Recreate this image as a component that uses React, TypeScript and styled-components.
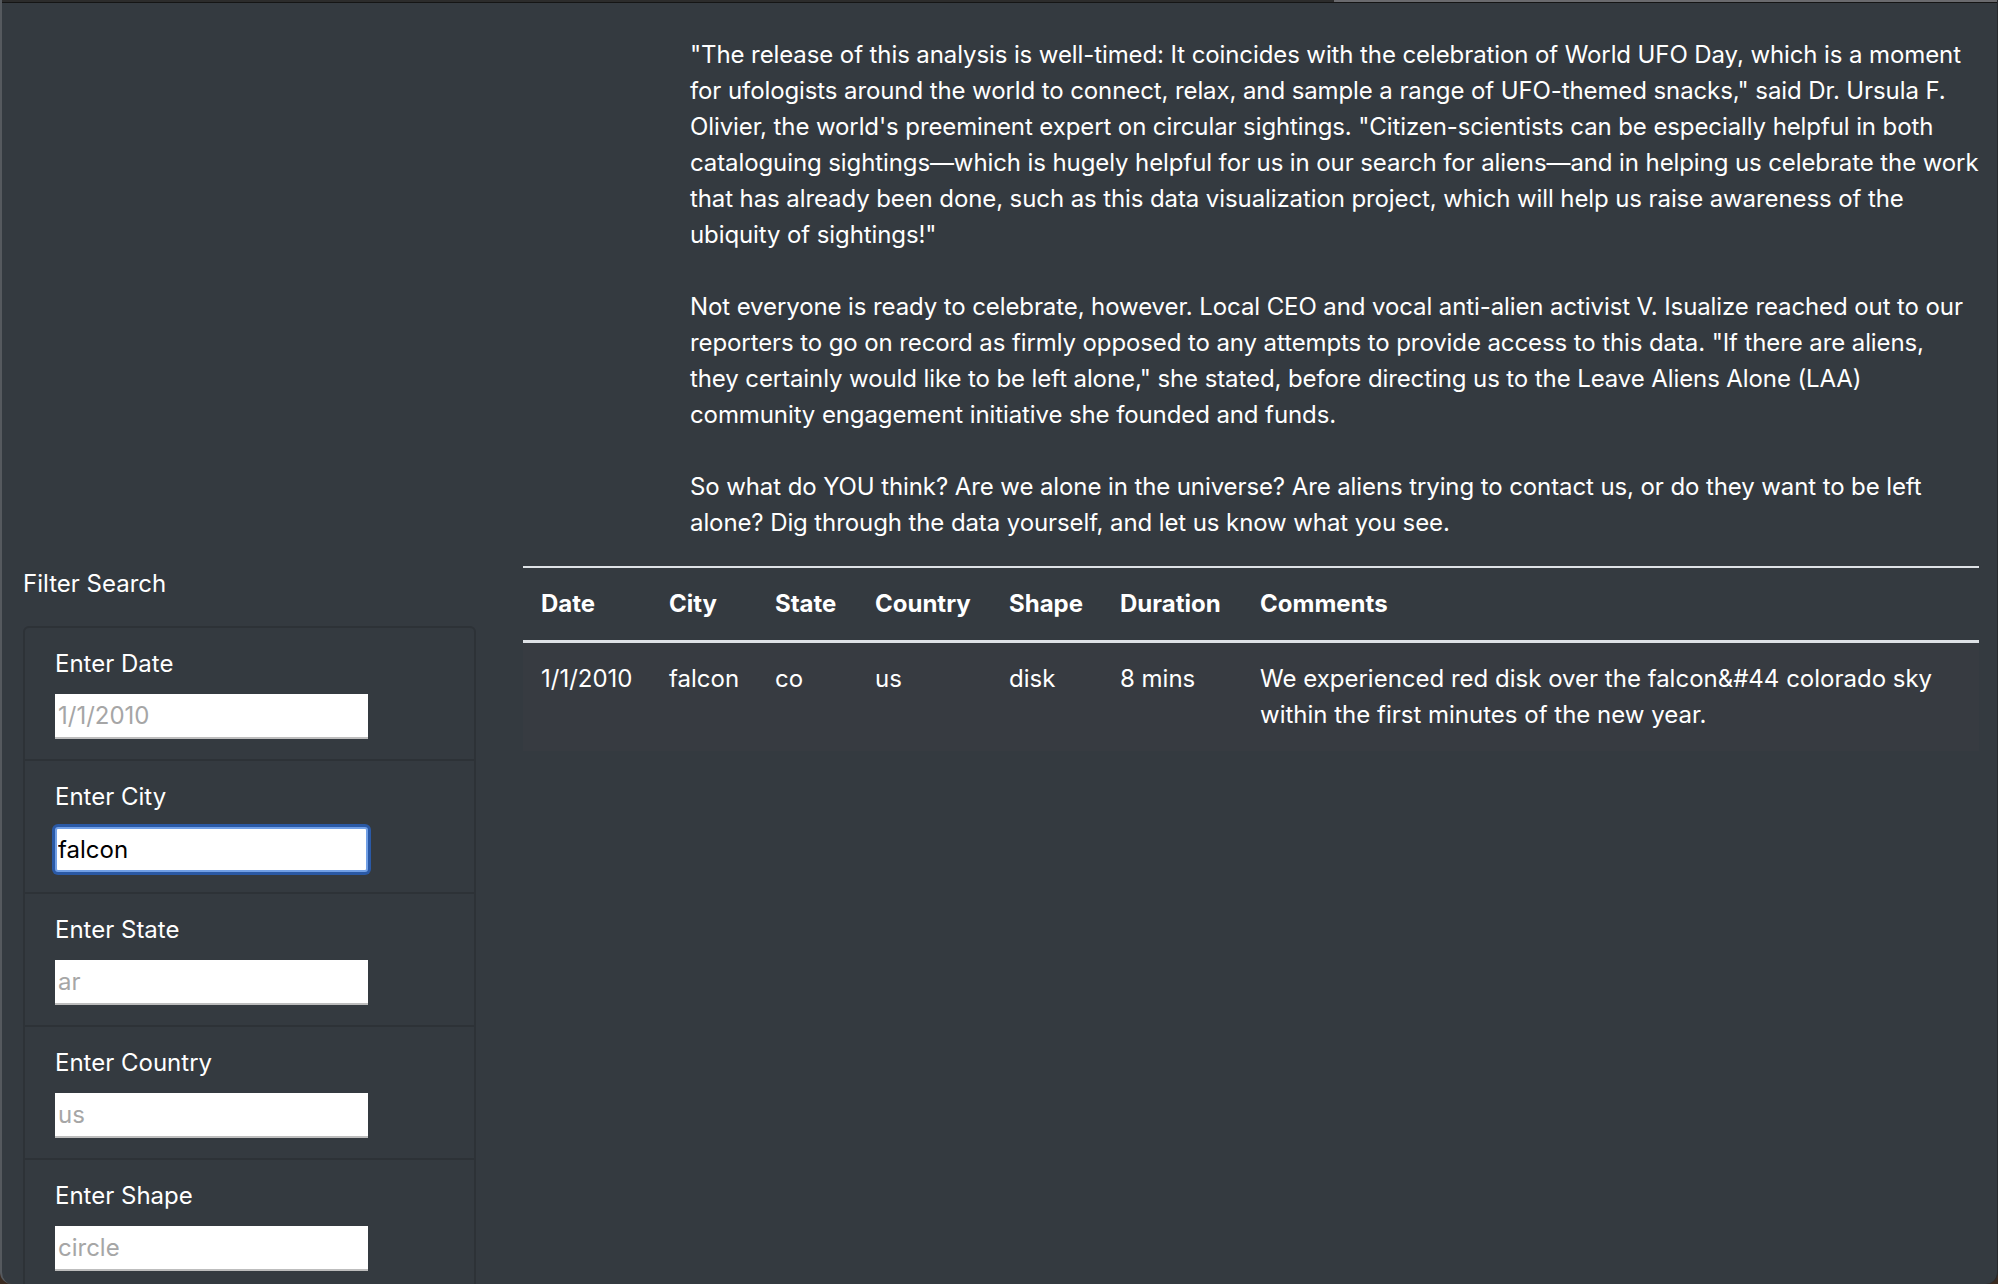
import React from 'react';
import styled, { createGlobalStyle, css } from 'styled-components';

const GlobalStyle = createGlobalStyle`
  html, body {
    margin: 0;
    padding: 0;
    background: #3a2a20;
  }
  body {
    font-family: Inter, "Noto Sans", "Liberation Sans", sans-serif;
  }
  * {
    box-sizing: border-box;
  }
`;

const Window = styled.div`
  width: 1998px;
  height: 1284px;
  overflow: hidden;
  display: flex;
  flex-direction: column;
  background: #343a40;
  color: #ffffff;
  border-left: 2px solid #55595e;
  border-right: 1px solid #272a2e;
  border-bottom-left-radius: 12px;
  border-bottom-right-radius: 12px;
  font-size: 24px;
  line-height: 36px;
`;

const FrameEdge = styled.div`
  display: flex;
  height: 3px;
  flex: 0 0 auto;
  border-bottom: 1px solid #151515;
`;

const EdgeSegment = styled.div<{ $light?: boolean }>`
  height: 2px;
  background: ${({ $light }) => ($light ? '#6a6a6e' : '#2c2c2c')};
  ${({ $light }) =>
    $light
      ? css`
          flex: 1;
        `
      : css`
          flex: 0 0 1332px;
        `}
`;

const Intro = styled.section`
  padding: 34px 18px 0 688px;
`;

const Paragraph = styled.p`
  margin: 0 0 36px;
  letter-spacing: -0.1px;

  &:last-child {
    margin-bottom: 25px;
  }
`;

const Main = styled.main`
  display: flex;
  align-items: flex-start;
  gap: 47px;
  padding: 0 18px 0 21px;
`;

const Sidebar = styled.aside`
  flex: 0 0 453px;
  display: flex;
  flex-direction: column;
`;

const SidebarTitle = styled.div`
  margin: 0 0 24px 0;
`;

const FilterList = styled.ul`
  list-style: none;
  margin: 0;
  padding: 0;
  border: 2px solid #2d3237;
  border-radius: 6px;
`;

const FilterItem = styled.li`
  padding: 18px 30px 20px;

  & + & {
    border-top: 2px solid #2d3237;
  }
`;

const FilterLabel = styled.label`
  display: block;
  margin-bottom: 12px;
`;

const FilterInput = styled.input<{ $focused?: boolean }>`
  display: block;
  width: 313px;
  height: 45px;
  margin: 0;
  padding: 0 0 0 3px;
  font-family: inherit;
  font-size: 24px;
  color: #000000;
  background: #ffffff;
  border: none;
  border-bottom: 2px solid #bdbdbd;
  border-radius: 0;
  outline: none;

  &::placeholder {
    color: #a6a6a6;
  }

  ${({ $focused }) =>
    $focused &&
    css`
      padding-left: 1px;
      border: 2px solid #72a0e6;
      border-radius: 3px;
      box-shadow: 0 0 0 3px #2a59a6;
    `}
`;

const TableWrap = styled.div`
  flex: 1;
`;

const Table = styled.table`
  width: 100%;
  border-collapse: collapse;
  table-layout: fixed;
  color: #ffffff;
`;

const Col = styled.col<{ $width?: number }>`
  width: ${({ $width }) => ($width ? `${$width}px` : 'auto')};
`;

const HeadCell = styled.th`
  padding: 18px;
  text-align: left;
  font-weight: 700;
  vertical-align: bottom;
  border-top: 2px solid #dee2e6;
  border-bottom: 3px solid #dee2e6;
`;

const BodyRow = styled.tr`
  background: #373b41;
`;

const Cell = styled.td`
  padding: 18px;
  vertical-align: top;
`;

const filters = [
  { label: 'Enter Date', placeholder: '1/1/2010' },
  { label: 'Enter City', placeholder: 'los angeles', value: 'falcon', focused: true },
  { label: 'Enter State', placeholder: 'ar' },
  { label: 'Enter Country', placeholder: 'us' },
  { label: 'Enter Shape', placeholder: 'circle' },
];

const columns = [
  { title: 'Date', width: 128 },
  { title: 'City', width: 106 },
  { title: 'State', width: 100 },
  { title: 'Country', width: 134 },
  { title: 'Shape', width: 111 },
  { title: 'Duration', width: 140 },
  { title: 'Comments' },
];

const sightings = [
  {
    date: '1/1/2010',
    city: 'falcon',
    state: 'co',
    country: 'us',
    shape: 'disk',
    duration: '8 mins',
    comments:
      'We experienced red disk over the falcon&#44 colorado sky within the first minutes of the new year.',
  },
];

export default function App() {
  return (
    <>
      <GlobalStyle />
      <Window>
        <FrameEdge>
          <EdgeSegment />
          <EdgeSegment $light />
        </FrameEdge>

        <Intro>
          <Paragraph>
            "The release of this analysis is well-timed: It coincides with the celebration of World
            UFO Day, which is a moment for ufologists around the world to connect, relax, and
            sample a range of UFO-themed snacks," said Dr. Ursula F. Olivier, the world's
            preeminent expert on circular sightings. "Citizen-scientists can be especially helpful
            in both cataloguing sightings—which is hugely helpful for us in our search for
            aliens—and in helping us celebrate the work that has already been done, such as this
            data visualization project, which will help us raise awareness of the ubiquity of
            sightings!"
          </Paragraph>
          <Paragraph>
            Not everyone is ready to celebrate, however. Local CEO and vocal anti-alien activist V.
            Isualize reached out to our reporters to go on record as firmly opposed to any attempts
            to provide access to this data. "If there are aliens, they certainly would like to be
            left alone," she stated, before directing us to the Leave Aliens Alone (LAA) community
            engagement initiative she founded and funds.
          </Paragraph>
          <Paragraph>
            So what do YOU think? Are we alone in the universe? Are aliens trying to contact us, or
            do they want to be left alone? Dig through the data yourself, and let us know what you
            see.
          </Paragraph>
        </Intro>

        <Main>
          <Sidebar>
            <SidebarTitle>Filter Search</SidebarTitle>
            <FilterList>
              {filters.map((f) => (
                <FilterItem key={f.label}>
                  <FilterLabel>{f.label}</FilterLabel>
                  <FilterInput
                    type="text"
                    placeholder={f.placeholder}
                    defaultValue={f.value}
                    $focused={f.focused}
                  />
                </FilterItem>
              ))}
            </FilterList>
          </Sidebar>

          <TableWrap>
            <Table>
              <colgroup>
                {columns.map((c) => (
                  <Col key={c.title} $width={c.width} />
                ))}
              </colgroup>
              <thead>
                <tr>
                  {columns.map((c) => (
                    <HeadCell key={c.title}>{c.title}</HeadCell>
                  ))}
                </tr>
              </thead>
              <tbody>
                {sightings.map((s) => (
                  <BodyRow key={s.date + s.city}>
                    <Cell>{s.date}</Cell>
                    <Cell>{s.city}</Cell>
                    <Cell>{s.state}</Cell>
                    <Cell>{s.country}</Cell>
                    <Cell>{s.shape}</Cell>
                    <Cell>{s.duration}</Cell>
                    <Cell>{s.comments}</Cell>
                  </BodyRow>
                ))}
              </tbody>
            </Table>
          </TableWrap>
        </Main>
      </Window>
    </>
  );
}
